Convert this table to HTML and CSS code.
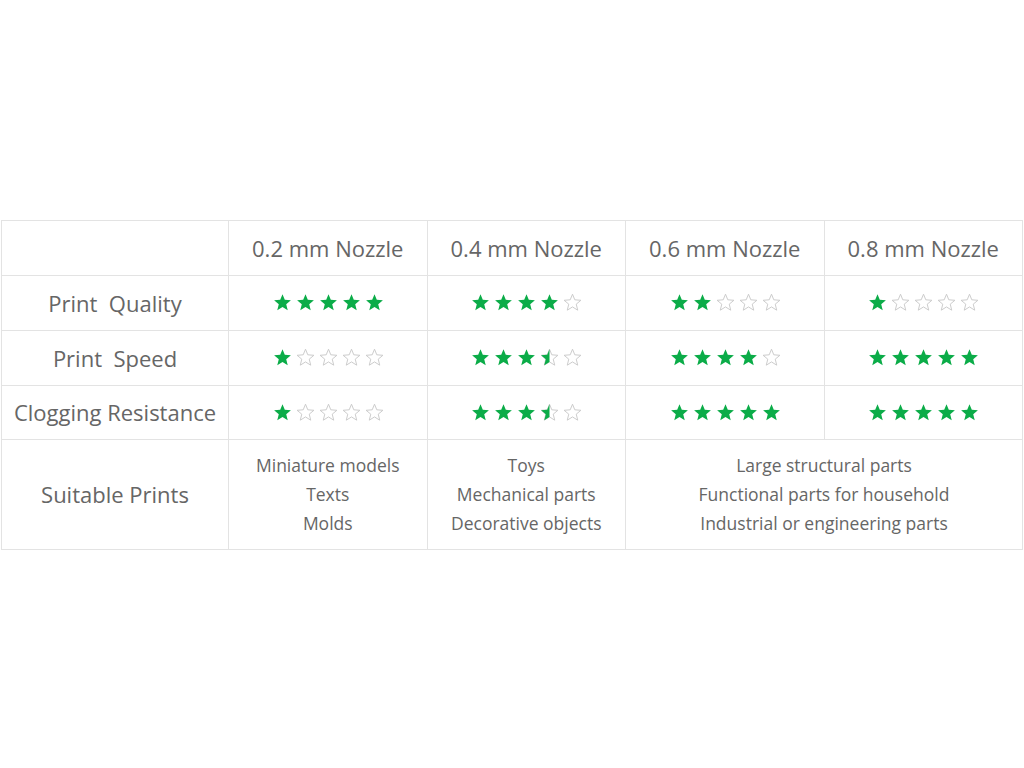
FILE: index.html
```html
<!DOCTYPE html>
<html lang="en">
<head>
    <meta charset="UTF-8">
    <meta name="viewport" content="width=device-width, initial-scale=1.0">
    <title>Nozzle Comparison</title>
    <link rel="stylesheet" href="styles.css">
</head>
<body>
    <svg class="defs" width="0" height="0" aria-hidden="true">
        <defs>
            <symbol id="star" viewBox="0 0 24 24">
                <polygon points="12,1.5 14.9,8.6 22.6,9.2 16.7,14.1 18.6,21.7 12,17.6 5.4,21.7 7.3,14.1 1.4,9.2 9.1,8.6"/>
            </symbol>
            <clipPath id="half">
                <rect x="0" y="0" width="12" height="24"/>
            </clipPath>
        </defs>
    </svg>

    <table class="compare">
        <colgroup>
            <col class="col-label">
            <col><col><col><col>
        </colgroup>
        <tr class="head">
            <td></td>
            <td>0.2 mm Nozzle</td>
            <td>0.4 mm Nozzle</td>
            <td>0.6 mm Nozzle</td>
            <td>0.8 mm Nozzle</td>
        </tr>
        <tr class="rating" data-stars="5,4,2,1">
            <td class="label">Print&nbsp; Quality</td>
            <td></td><td></td><td></td><td></td>
        </tr>
        <tr class="rating" data-stars="1,3.5,4,5">
            <td class="label">Print&nbsp; Speed</td>
            <td></td><td></td><td></td><td></td>
        </tr>
        <tr class="rating last" data-stars="1,3.5,5,5">
            <td class="label">Clogging Resistance</td>
            <td></td><td></td><td></td><td></td>
        </tr>
        <tr class="prints">
            <td class="label">Suitable Prints</td>
            <td>Miniature models<br>Texts<br>Molds</td>
            <td>Toys<br>Mechanical parts<br>Decorative objects</td>
            <td colspan="2">Large structural parts<br>Functional parts for household<br>Industrial or engineering parts</td>
        </tr>
    </table>

    <script>
        // Build the star rating cells from each row's data-stars list
        const starSvg = (kind) =>
            `<svg class="star" viewBox="0 0 24 24">` +
            (kind === 'full'
                ? `<use href="#star" class="fill"/>`
                : `<use href="#star" class="empty"/>` +
                  (kind === 'half' ? `<use href="#star" class="fill" clip-path="url(#half)"/>` : '')) +
            `</svg>`;

        document.querySelectorAll('tr.rating').forEach(row => {
            const values = row.dataset.stars.split(',').map(Number);
            const cells = row.querySelectorAll('td:not(.label)');
            values.forEach((value, i) => {
                let html = '';
                for (let n = 1; n <= 5; n++) {
                    if (value >= n) html += starSvg('full');
                    else if (value >= n - 0.5) html += starSvg('half');
                    else html += starSvg('empty');
                }
                cells[i].innerHTML = `<div class="stars">${html}</div>`;
            });
        });
    </script>
</body>
</html>
```

FILE: styles.css
```css
:root {
    --text-color: #666666;
    --line-color: #e3e3e3;
    --star-green: #0bac48;
    --star-empty: #c9c9c9;
}

body {
    margin: 0;
    min-height: 100vh;
    display: flex;
    align-items: center;
    justify-content: center;
    font-family: "Open Sans", "Liberation Sans", Arial, sans-serif;
    color: var(--text-color);
    background-color: white;
}

.defs {
    position: absolute;
}

.compare {
    width: 1022px;
    border-collapse: collapse;
    table-layout: fixed;
    margin-top: 1px;
}

.compare td {
    border: 1px solid var(--line-color);
    text-align: center;
    vertical-align: middle;
    padding: 0;
}

.col-label {
    width: 227px;
}

.head td {
    height: 54px;
    font-size: 22px;
}

.rating td {
    height: 54px;
}

.rating.last td {
    height: 53px;
}

.label {
    font-size: 22px;
}

.prints td {
    height: 109px;
    font-size: 17.5px;
    line-height: 29px;
}

.prints td.label {
    font-size: 22px;
    line-height: normal;
}

.stars {
    display: flex;
    justify-content: center;
    gap: 4px;
    padding-left: 1px;
}

.star {
    width: 19px;
    height: 19px;
    display: block;
}

.star .fill {
    fill: var(--star-green);
}

.star .empty {
    fill: none;
    stroke: var(--star-empty);
    stroke-width: 1.2;
}
```
